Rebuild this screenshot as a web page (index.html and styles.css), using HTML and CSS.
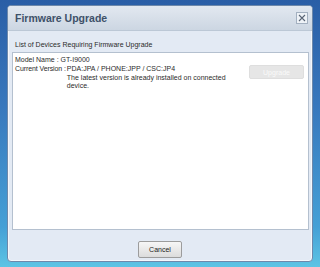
FILE: index.html
```html
<!DOCTYPE html>
<html>
<head>
    <link rel="stylesheet" href="styles.css">
</head>
<body>
    <div class="dialog">
        <div class="title-bar">
            <span class="title">Firmware Upgrade</span>
            <button class="close" aria-label="Close">
                <svg width="8" height="8" viewBox="0 0 8 8">
                    <path d="M1 1 L7 7 M7 1 L1 7" stroke="#5a6576" stroke-width="1.1" fill="none"/>
                </svg>
            </button>
        </div>
        <div class="content">
            <div class="list-label">List of Devices Requiring Firmware Upgrade</div>
            <div class="device-list">
                <div class="device">
                    <div class="device-info">
                        <div class="line">Model Name : GT-I9000</div>
                        <div class="version">
                            <span class="version-label">Current Version :</span>
                            <div class="version-value">
                                <div class="line">PDA:JPA / PHONE:JPP / CSC:JP4</div>
                                <div class="note">The latest version is already installed on connected<br>device.</div>
                            </div>
                        </div>
                    </div>
                    <button class="upgrade" disabled>Upgrade</button>
                </div>
            </div>
        </div>
        <div class="footer">
            <button class="cancel">Cancel</button>
        </div>
    </div>
</body>
</html>
```
FILE: styles.css
```css
:root {
    --dialog-bg: #e3eaf4;
    --title-color: #3e5169;
    --text-color: #2b2b2b;
    --border-color: #b4c0cf;
}

html, body {
    margin: 0;
    height: 100%;
}

body {
    font-family: 'Liberation Sans', Arial, sans-serif;
    background: linear-gradient(to bottom, #2a5ea6 0%, #3878bd 40%, #45a0d6 85%, #5cc4e4 100%);
    padding: 5px 7px;
    box-sizing: border-box;
    overflow: hidden;
}

.dialog {
    height: 257px;
    display: flex;
    flex-direction: column;
    background: var(--dialog-bg);
    border: 1px solid #6d88aa;
    border-radius: 4px;
    box-sizing: border-box;
    overflow: hidden;
    box-shadow: inset 0 0 0 1px #f4f7fb;
}

.title-bar {
    height: 24px;
    flex-shrink: 0;
    display: flex;
    align-items: center;
    justify-content: space-between;
    padding: 0 4px 0 7px;
    background: linear-gradient(to bottom, #e2e8f0, #ccd6e2);
    border-bottom: 1px solid #bcc8d6;
}

.title {
    font-size: 10.5px;
    font-weight: bold;
    color: var(--title-color);
}

.close {
    width: 12px;
    height: 12px;
    padding: 0;
    display: flex;
    align-items: center;
    justify-content: center;
    border: 1px solid #a3b0c0;
    background: #eef2f7;
    box-sizing: border-box;
}

.content {
    flex: 1;
    display: flex;
    flex-direction: column;
    padding: 9px 3px 0 4px;
}

.list-label {
    font-size: 7px;
    color: var(--text-color);
    padding-left: 3px;
    line-height: 10px;
    margin-bottom: 2px;
}

.device-list {
    height: 178px;
    background: #ffffff;
    border: 1px solid var(--border-color);
    box-sizing: border-box;
    padding: 2px 4px 0 2px;
    font-size: 7px;
    color: var(--text-color);
}

.device {
    display: flex;
    justify-content: space-between;
    align-items: flex-start;
}

.line {
    line-height: 9px;
}

.version {
    display: flex;
}

.version-label {
    line-height: 9px;
    flex-shrink: 0;
    white-space: nowrap;
    letter-spacing: -0.1px;
    margin-right: 1px;
}

.note {
    line-height: 7.5px;
    margin-top: 1px;
}

.upgrade {
    margin-top: 10px;
    width: 55px;
    height: 14px;
    font-family: inherit;
    font-size: 7px;
    color: #fafafa;
    background: #e6e6e6;
    border: 1px solid #dedede;
    border-radius: 2px;
}

.footer {
    height: 32px;
    flex-shrink: 0;
    display: flex;
    justify-content: center;
    align-items: flex-start;
    padding-top: 11px;
    box-sizing: border-box;
}

.cancel {
    width: 44px;
    height: 17px;
    padding: 0;
    font-family: inherit;
    font-size: 7px;
    color: #222;
    background: linear-gradient(to bottom, #f6f6f6, #dcdcdc);
    border: 1px solid #9c9c9c;
    border-radius: 2px;
}
```
